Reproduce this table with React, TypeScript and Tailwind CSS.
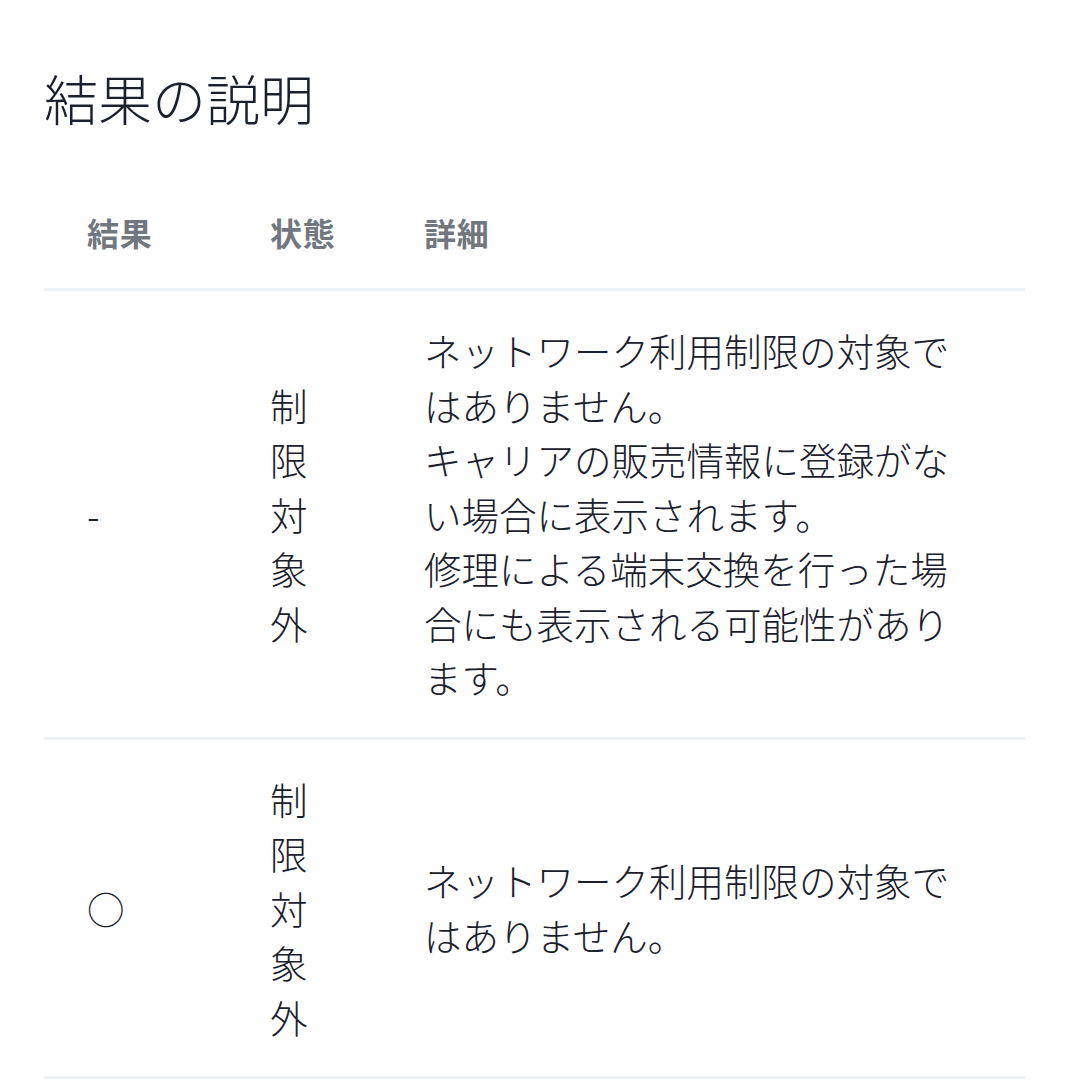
const font = {
  fontFamily: '"Noto Sans CJK JP", "Noto Sans", sans-serif',
};

interface Row {
  result: string;
  status: string;
  detail: string[];
}

const rows: Row[] = [
  {
    result: "-",
    status: "制限対象外",
    detail: [
      "ネットワーク利用制限の対象ではありません。",
      "キャリアの販売情報に登録がない場合に表示されます。",
      "修理による端末交換を行った場合にも表示される可能性があります。",
    ],
  },
  {
    result: "○",
    status: "制限対象外",
    detail: ["ネットワーク利用制限の対象ではありません。"],
  },
];

function HeaderCell({ children }: { children: React.ReactNode }) {
  return (
    <div className="px-[43px] pt-[32px] pb-[33px] text-[32px] leading-[46px] font-bold text-[#72777f] tracking-[0.02em]">
      {children}
    </div>
  );
}

export default function App() {
  return (
    <div
      className="min-h-[1080px] w-[1070px] bg-white pl-[44px] pr-[45px] pt-[60px]"
      style={font}
    >
      <h2 className="text-[54px] leading-[76px] font-light text-[#1a202c] mb-[41px]">
        結果の説明
      </h2>

      <div className="w-full">
        <div className="grid grid-cols-[183px_154px_1fr] border-b-[3px] border-[#edf2f7]">
          <HeaderCell>結果</HeaderCell>
          <HeaderCell>状態</HeaderCell>
          <HeaderCell>詳細</HeaderCell>
        </div>

        {rows.map((row, i) => (
          <div
            key={i}
            className="grid grid-cols-[183px_154px_1fr] items-center border-b-[3px] border-[#edf2f7] text-[37.5px] leading-[54.5px] font-light text-[#1a202c]"
          >
            <div className="px-[43px] py-[32px]">{row.result}</div>
            <div className="px-[43px] py-[32px] break-all">{row.status}</div>
            <div className="px-[43px] py-[32px]">
              {row.detail.map((line, j) => (
                <div key={j}>{line}</div>
              ))}
            </div>
          </div>
        ))}
      </div>
    </div>
  );
}
